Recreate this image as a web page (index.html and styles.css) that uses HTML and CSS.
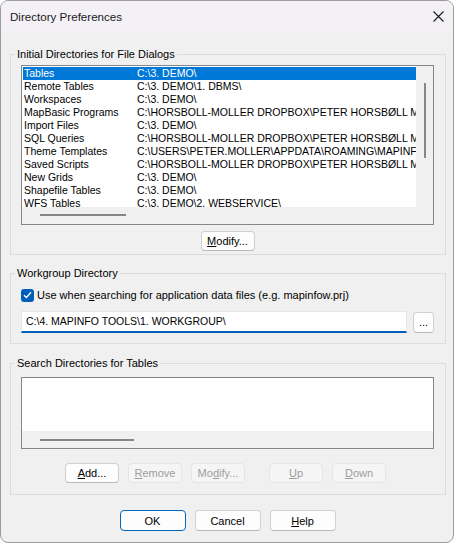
FILE: index.html
```html
<!DOCTYPE html>
<html lang="en">
<head>
  <meta charset="UTF-8" />
  <meta name="viewport" content="width=device-width, initial-scale=1.0" />
  <title>Directory Preferences</title>
  <link rel="stylesheet" href="styles.css">
</head>
<body>
  <div class="window">
    <div class="titlebar">
      <span class="title">Directory Preferences</span>
      <svg class="close" width="11" height="11" viewBox="0 0 11 11">
        <path d="M0.5 0.5 L10.5 10.5 M10.5 0.5 L0.5 10.5" stroke="#1b1b1b" stroke-width="1.1" fill="none" />
      </svg>
    </div>

    <div class="content">
      <fieldset class="group dirs">
        <legend>Initial Directories for File Dialogs</legend>
        <div class="listbox tall">
          <div class="rows">
            <div class="row selected"><span class="name">Tables</span><span>C:\3. DEMO\</span></div>
            <div class="row"><span class="name">Remote Tables</span><span>C:\3. DEMO\1. DBMS\</span></div>
            <div class="row"><span class="name">Workspaces</span><span>C:\3. DEMO\</span></div>
            <div class="row"><span class="name">MapBasic Programs</span><span>C:\HORSBOLL-MOLLER DROPBOX\PETER HORSBØLL MØLLER\MAPBASIC\</span></div>
            <div class="row"><span class="name">Import Files</span><span>C:\3. DEMO\</span></div>
            <div class="row"><span class="name">SQL Queries</span><span>C:\HORSBOLL-MOLLER DROPBOX\PETER HORSBØLL MØLLER\SQL\</span></div>
            <div class="row"><span class="name">Theme Templates</span><span>C:\USERS\PETER.MOLLER\APPDATA\ROAMING\MAPINFO\MAPINFO\</span></div>
            <div class="row"><span class="name">Saved Scripts</span><span>C:\HORSBOLL-MOLLER DROPBOX\PETER HORSBØLL MØLLER\SCRIPTS\</span></div>
            <div class="row"><span class="name">New Grids</span><span>C:\3. DEMO\</span></div>
            <div class="row"><span class="name">Shapefile Tables</span><span>C:\3. DEMO\</span></div>
            <div class="row"><span class="name">WFS Tables</span><span>C:\3. DEMO\2. WEBSERVICE\</span></div>
          </div>
          <div class="vscroll"><div class="vthumb"></div></div>
          <div class="hscroll"><div class="hthumb"></div></div>
          <div class="corner"></div>
        </div>
        <div class="actions">
          <button class="btn"><u>M</u>odify...</button>
        </div>
      </fieldset>

      <fieldset class="group workgroup">
        <legend>Workgroup Directory</legend>
        <label class="check">
          <span class="box">
            <svg width="9" height="8" viewBox="0 0 9 8"><path d="M1 4.2 L3.4 6.5 L8 1.2" stroke="#fff" stroke-width="1.3" fill="none" /></svg>
          </span>
          <span>Use when <u>s</u>earching for application data files (e.g. mapinfow.prj)</span>
        </label>
        <div class="field-row">
          <div class="field">C:\4. MAPINFO TOOLS\1. WORKGROUP\</div>
          <button class="btn browse">...</button>
        </div>
      </fieldset>

      <fieldset class="group search">
        <legend>Search Directories for Tables</legend>
        <div class="listbox short">
          <div class="rows"></div>
          <div class="hscroll"><div class="hthumb wide"></div></div>
        </div>
        <div class="actions spaced">
          <button class="btn"><u>A</u>dd...</button>
          <button class="btn" disabled><u>R</u>emove</button>
          <button class="btn" disabled>Mo<u>d</u>ify...</button>
          <button class="btn move" disabled><u>U</u>p</button>
          <button class="btn" disabled><u>D</u>own</button>
        </div>
      </fieldset>

      <div class="footer">
        <button class="btn wide default">OK</button>
        <button class="btn wide">Cancel</button>
        <button class="btn wide"><u>H</u>elp</button>
      </div>
    </div>
  </div>
</body>
</html>
```

FILE: styles.css
```css
body {
  margin: 0;
  background: #fff;
  font-family: 'Liberation Sans', Arial, sans-serif;
  font-size: 11px;
  color: #000;
}
.window {
  width: 454px;
  height: 543px;
  box-sizing: border-box;
  border: 1px solid #9c9c9c;
  border-radius: 8px;
  background: #f0f0f0;
  overflow: hidden;
}
.titlebar {
  height: 30px;
  background: #f3f1f6;
  display: flex;
  align-items: center;
  justify-content: space-between;
  padding: 0 9px 0 9px;
}
.title {
  color: #1a1a1a;
  font-size: 11.6px;
}
.close {
  margin-top: 1px;
}
.content {
  padding: 15px 7px 0 9px;
}
.group {
  margin: 0;
  min-width: 0;
  border: 1px solid #dcdcdc;
  padding: 3px 11px 3px 10px;
}
.group legend {
  padding: 0 2px;
  margin-left: -6px;
  line-height: 16px;
}
.workgroup {
  margin-top: 10px;
  padding: 6px 11px 10px 10px;
}
.search {
  margin-top: 11px;
  padding: 6px 11px 11px 10px;
}

/* list boxes */
.listbox {
  box-sizing: border-box;
  border: 1px solid #868686;
  background: #fff;
  display: grid;
}
.listbox.tall {
  height: 160px;
  grid-template-columns: 1fr 17px;
  grid-template-rows: 1fr 17px;
}
.listbox.short {
  height: 72px;
  grid-template-columns: 1fr;
  grid-template-rows: 1fr 17px;
}
.rows {
  overflow: hidden;
  padding: 1px 0 0 1px;
  min-width: 0;
}
.row {
  display: flex;
  height: 13px;
  line-height: 13px;
  white-space: nowrap;
  font-size: 10.5px;
}
.row.selected {
  background: #0078d7;
  color: #fff;
}
.name {
  flex: none;
  width: 114px;
  box-sizing: border-box;
  padding-left: 1px;
}
.vscroll, .hscroll, .corner {
  background: #f0f0f0;
}
.vthumb {
  margin: 17px 0 0 8px;
  width: 2px;
  height: 75px;
  background: #868686;
}
.hthumb {
  margin: 7px 0 0 18px;
  width: 86px;
  height: 2px;
  background: #868686;
}
.hthumb.wide {
  margin-top: 8px;
  width: 94px;
}

/* buttons */
.actions {
  display: flex;
  justify-content: center;
  gap: 10px;
  margin-top: 6px;
}
.actions.spaced {
  gap: 9px;
  margin-top: 14px;
  padding-right: 4px;
}
.btn {
  width: 54px;
  height: 20px;
  padding: 0;
  box-sizing: border-box;
  border: 1px solid #d0d0d0;
  border-bottom-color: #b9b9b9;
  border-radius: 4px;
  background: #fdfdfd;
  font-family: inherit;
  font-size: 11px;
  color: #000;
}
.btn:disabled {
  background: #f5f5f5;
  border-color: #e5e5e5;
  color: #9d9d9d;
}
.btn.move {
  margin-left: 15px;
}
.btn.wide {
  width: 66px;
  height: 21px;
}
.btn.default {
  border-color: #0067c0;
}
.footer {
  display: flex;
  justify-content: center;
  gap: 9px;
  margin-top: 15px;
  padding-right: 1px;
}

/* workgroup */
.check {
  display: flex;
  align-items: center;
  gap: 3px;
  height: 16px;
}
.box {
  width: 13px;
  height: 13px;
  border-radius: 3px;
  background: #005fb8;
  display: flex;
  align-items: center;
  justify-content: center;
}
.field-row {
  display: flex;
  gap: 6px;
  margin-top: 8px;
  align-items: center;
}
.field {
  flex: 1;
  height: 22px;
  box-sizing: border-box;
  background: #fff;
  border: 1px solid #e6e6e6;
  border-bottom: 2px solid #005fb8;
  padding-left: 4px;
  font-size: 10.5px;
  line-height: 19px;
}
.btn.browse {
  width: 21px;
  height: 21px;
}
```
